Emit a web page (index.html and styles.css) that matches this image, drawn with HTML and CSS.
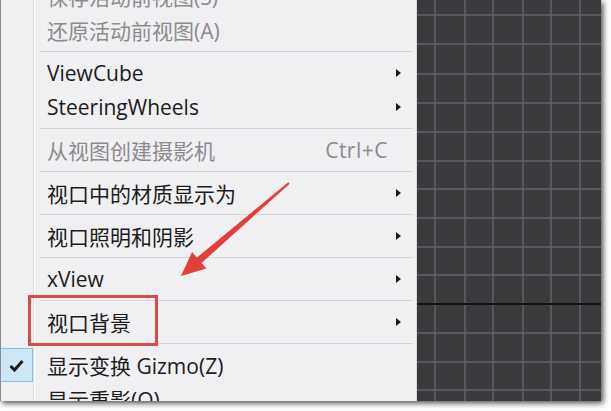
FILE: index.html
```html
<!DOCTYPE html>
<html lang="zh-CN">
<head>
<meta charset="utf-8">
<title>视口菜单</title>
<link rel="stylesheet" href="styles.css">
</head>
<body>
<div class="frame">
  <div class="menu">
    <ul class="list">
      <li class="group">
        <div class="item disabled"><span class="check"></span><span class="label">保存活动前视图(S)</span><span class="key"></span><span class="sub"></span></div>
        <div class="item disabled"><span class="check"></span><span class="label">还原活动前视图(A)</span><span class="key"></span><span class="sub"></span></div>
      </li>
      <li class="sep"></li>
      <li class="group">
        <div class="item"><span class="check"></span><span class="label">ViewCube</span><span class="key"></span><span class="sub"><i class="tri"></i></span></div>
        <div class="item"><span class="check"></span><span class="label">SteeringWheels</span><span class="key"></span><span class="sub"><i class="tri"></i></span></div>
      </li>
      <li class="sep"></li>
      <li class="group">
        <div class="item disabled"><span class="check"></span><span class="label">从视图创建摄影机</span><span class="key">Ctrl+C</span><span class="sub"></span></div>
      </li>
      <li class="sep"></li>
      <li class="group">
        <div class="item"><span class="check"></span><span class="label">视口中的材质显示为</span><span class="key"></span><span class="sub"><i class="tri"></i></span></div>
      </li>
      <li class="sep"></li>
      <li class="group">
        <div class="item"><span class="check"></span><span class="label">视口照明和阴影</span><span class="key"></span><span class="sub"><i class="tri"></i></span></div>
      </li>
      <li class="sep"></li>
      <li class="group">
        <div class="item"><span class="check"></span><span class="label">xView</span><span class="key"></span><span class="sub"><i class="tri"></i></span></div>
      </li>
      <li class="sep"></li>
      <li class="group">
        <div class="item"><span class="check"></span><span class="label">视口背景</span><span class="key"></span><span class="sub"><i class="tri"></i></span></div>
      </li>
      <li class="sep"></li>
      <li class="group">
        <div class="item checked"><span class="check"><svg width="15" height="13" viewBox="0 0 15 13"><path d="M1.5 7 L5.5 11 L13.5 2" fill="none" stroke="#1c1c1c" stroke-width="3"/></svg></span><span class="label">显示变换 Gizmo(Z)</span><span class="key"></span><span class="sub"></span></div>
        <div class="item"><span class="check"></span><span class="label">显示重影(O)</span><span class="key"></span><span class="sub"></span></div>
      </li>
    </ul>
  </div>
  <div class="viewport">
    <svg class="grid" width="184" height="401" viewBox="0 0 184 401">
      <g stroke="#636266" stroke-width="1.5">
        <line x1="18" y1="0" x2="18" y2="401"/>
        <line x1="48" y1="0" x2="48" y2="401"/>
        <line x1="76" y1="0" x2="76" y2="401"/>
        <line x1="106" y1="0" x2="106" y2="401"/>
        <line x1="134" y1="0" x2="134" y2="401"/>
        <line x1="163" y1="0" x2="163" y2="401"/>
        <line x1="0" y1="15" x2="184" y2="15"/>
        <line x1="0" y1="44" x2="184" y2="44"/>
        <line x1="0" y1="74" x2="184" y2="74"/>
        <line x1="0" y1="103" x2="184" y2="103"/>
        <line x1="0" y1="132" x2="184" y2="132"/>
        <line x1="0" y1="161" x2="184" y2="161"/>
        <line x1="0" y1="189" x2="184" y2="189"/>
        <line x1="0" y1="218" x2="184" y2="218"/>
        <line x1="0" y1="247" x2="184" y2="247"/>
        <line x1="0" y1="275" x2="184" y2="275"/>
        <line x1="0" y1="333" x2="184" y2="333"/>
        <line x1="0" y1="362" x2="184" y2="362"/>
        <line x1="0" y1="390" x2="184" y2="390"/>
      </g>
      <line x1="0" y1="304" x2="184" y2="304" stroke="#141414" stroke-width="2"/>
    </svg>
  </div>
  <div class="highlight"></div>
  <svg class="arrow" width="601" height="401" viewBox="0 0 601 401">
    <polygon points="288.3,182.2 289.7,183.8 201.5,263 206.5,268.6 181,276 192,252 196.9,257.6" fill="#e3403d"/>
  </svg>
</div>
</body>
</html>
```

FILE: styles.css
```css
* { box-sizing: border-box; }
html, body { margin: 0; padding: 0; background: #ffffff; }
body { width: 611px; height: 411px; overflow: hidden; }

.frame {
  position: relative;
  width: 601px;
  height: 401px;
  display: flex;
  overflow: hidden;
  box-shadow: 2px 2px 6px rgba(0, 0, 0, 0.75);
  border-left: 1px solid #8c8c8c;
  font-family: "Open Sans", "Noto Sans CJK SC", sans-serif;
}

.menu {
  width: 416px;
  flex: none;
  overflow: hidden;
  background:
    linear-gradient(to right, transparent 32px, #dcdce0 32px, #dcdce0 33px, #fbfbfc 33px, #fbfbfc 34px, transparent 34px),
    #f0eff2;
  border-right: 1px solid #d9d9dc;
}

.list {
  list-style: none;
  margin: -25px 0 0 0;
  padding: 0;
}

.group { padding: 4px 0; }

.sep {
  height: 1px;
  margin: 0 3px 0 39px;
  background: #d4d4d8;
}

.item {
  display: grid;
  grid-template-columns: 32px 1fr auto 36px;
  align-items: center;
  height: 34px;
  font-size: 21px;
  color: #1c1c1c;
  white-space: nowrap;
}

.item.disabled { color: #8b8b8d; }

.check {
  height: 34px;
  display: flex;
  align-items: center;
  justify-content: center;
}

.item.checked .check {
  background: #cce7f5;
  border: 1px solid #84c1e2;
  margin-left: -1px;
  width: 33px;
}

.label { padding-left: 14px; }

.key {
  font-size: 21px;
  color: #8b8b8d;
  letter-spacing: 0.5px;
  margin-right: -8px;
}

.sub {
  display: flex;
  justify-content: flex-start;
  padding-left: 16px;
}

.tri {
  width: 0;
  height: 0;
  border-top: 4px solid transparent;
  border-bottom: 4px solid transparent;
  border-left: 5px solid #1c1c1c;
}

.viewport {
  flex: 1;
  background: #3b3a3d;
  overflow: hidden;
}

.grid { display: block; }

.highlight {
  position: absolute;
  left: 27px;
  top: 295px;
  width: 130px;
  height: 51px;
  border: 3px solid #d94a4a;
}

.arrow {
  position: absolute;
  left: -1px;
  top: 0;
  pointer-events: none;
}
```
